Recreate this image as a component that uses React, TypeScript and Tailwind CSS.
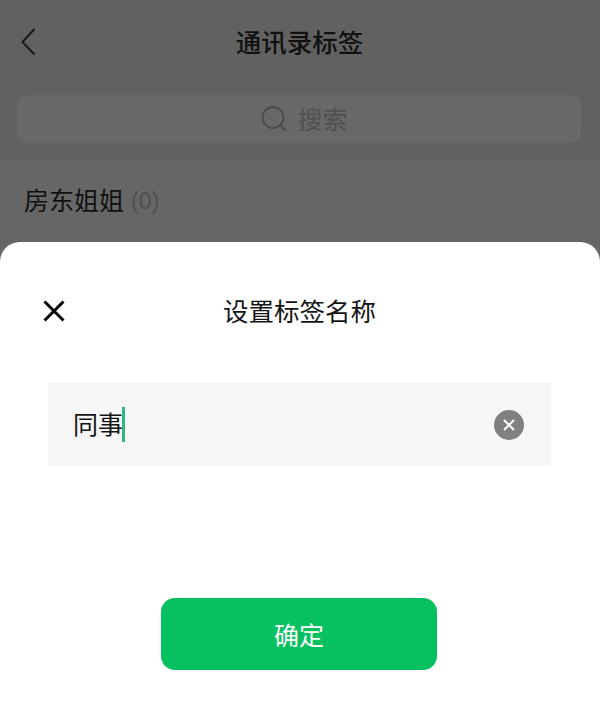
const cjk = "font-['Liberation_Sans','Noto_Sans_CJK_SC',sans-serif]";

export default function App() {
  return (
    <div className={`relative flex h-[716px] w-[600px] flex-col overflow-hidden bg-[#666666] ${cjk}`}>
      {/* 背景页 */}
      <div className="h-[161px] bg-[#616161] px-[17px]">
        <div className="relative flex h-[84px] items-center justify-center">
          <svg className="absolute left-[2px] top-[27px]" width="20" height="30" viewBox="0 0 20 30" fill="none">
            <path d="M15.5 2 L3.5 15 L15.5 27.5" stroke="#1a1a1a" strokeWidth="2" />
          </svg>
          <span className="pt-[2px] pr-[1px] text-[25.5px] font-medium text-[#111111]">通讯录标签</span>
        </div>
        <div className="mt-[11px] flex h-[48px] w-[564px] items-center justify-center rounded-[10px] bg-[#686868] pl-[10px]">
          <svg width="28" height="28" viewBox="0 0 28 28" fill="none">
            <circle cx="13" cy="12.5" r="10.5" stroke="#4a4a4a" strokeWidth="1.8" />
            <path d="M20.5 20.5 L26 26" stroke="#4a4a4a" strokeWidth="1.8" />
          </svg>
          <span className="ml-[9px] pt-[3px] text-[25px] text-[#505050]">搜索</span>
        </div>
      </div>
      <div className="flex h-[81px] items-center pl-[24px]">
        <span className="text-[25px] text-[#111111]">房东姐姐</span>
        <span className="ml-[7px] text-[23px] text-[#505050]">(0)</span>
      </div>

      {/* 底部弹层 */}
      <div className="flex flex-1 flex-col rounded-t-[20px] bg-white">
        <div className="relative mt-[46px] flex h-[46px] items-center justify-center">
          <svg className="absolute left-[43px] top-[12px]" width="22" height="22" viewBox="0 0 22 22" fill="none">
            <path d="M1.5 1.5 L20.5 20.5 M20.5 1.5 L1.5 20.5" stroke="#000" strokeWidth="3" />
          </svg>
          <span className="pt-[2px] pr-[1px] text-[25.5px] text-[#141414]">设置标签名称</span>
        </div>
        <div className="mx-[48px] mt-[49px] flex h-[83px] w-[503px] items-center bg-[#f6f6f6] pl-[25px] pr-[27px]">
          <span className="pt-[2px] text-[25px] text-[#141414]">同事</span>
          <span className="-ml-[1px] h-[35px] w-[3px] bg-[#2fb87f]" />
          <span className="ml-auto flex h-[30px] w-[30px] items-center justify-center rounded-full bg-[#808080]">
            <svg width="14" height="14" viewBox="0 0 14 14" fill="none">
              <path d="M2 2 L12 12 M12 2 L2 12" stroke="#fff" strokeWidth="2" />
            </svg>
          </span>
        </div>
        <button className="ml-[161px] mt-[132px] flex h-[72px] w-[276px] items-center justify-center rounded-[14px] bg-[#07c160] pt-[5px] text-[25px] text-white">
          确定
        </button>
      </div>
    </div>
  );
}
